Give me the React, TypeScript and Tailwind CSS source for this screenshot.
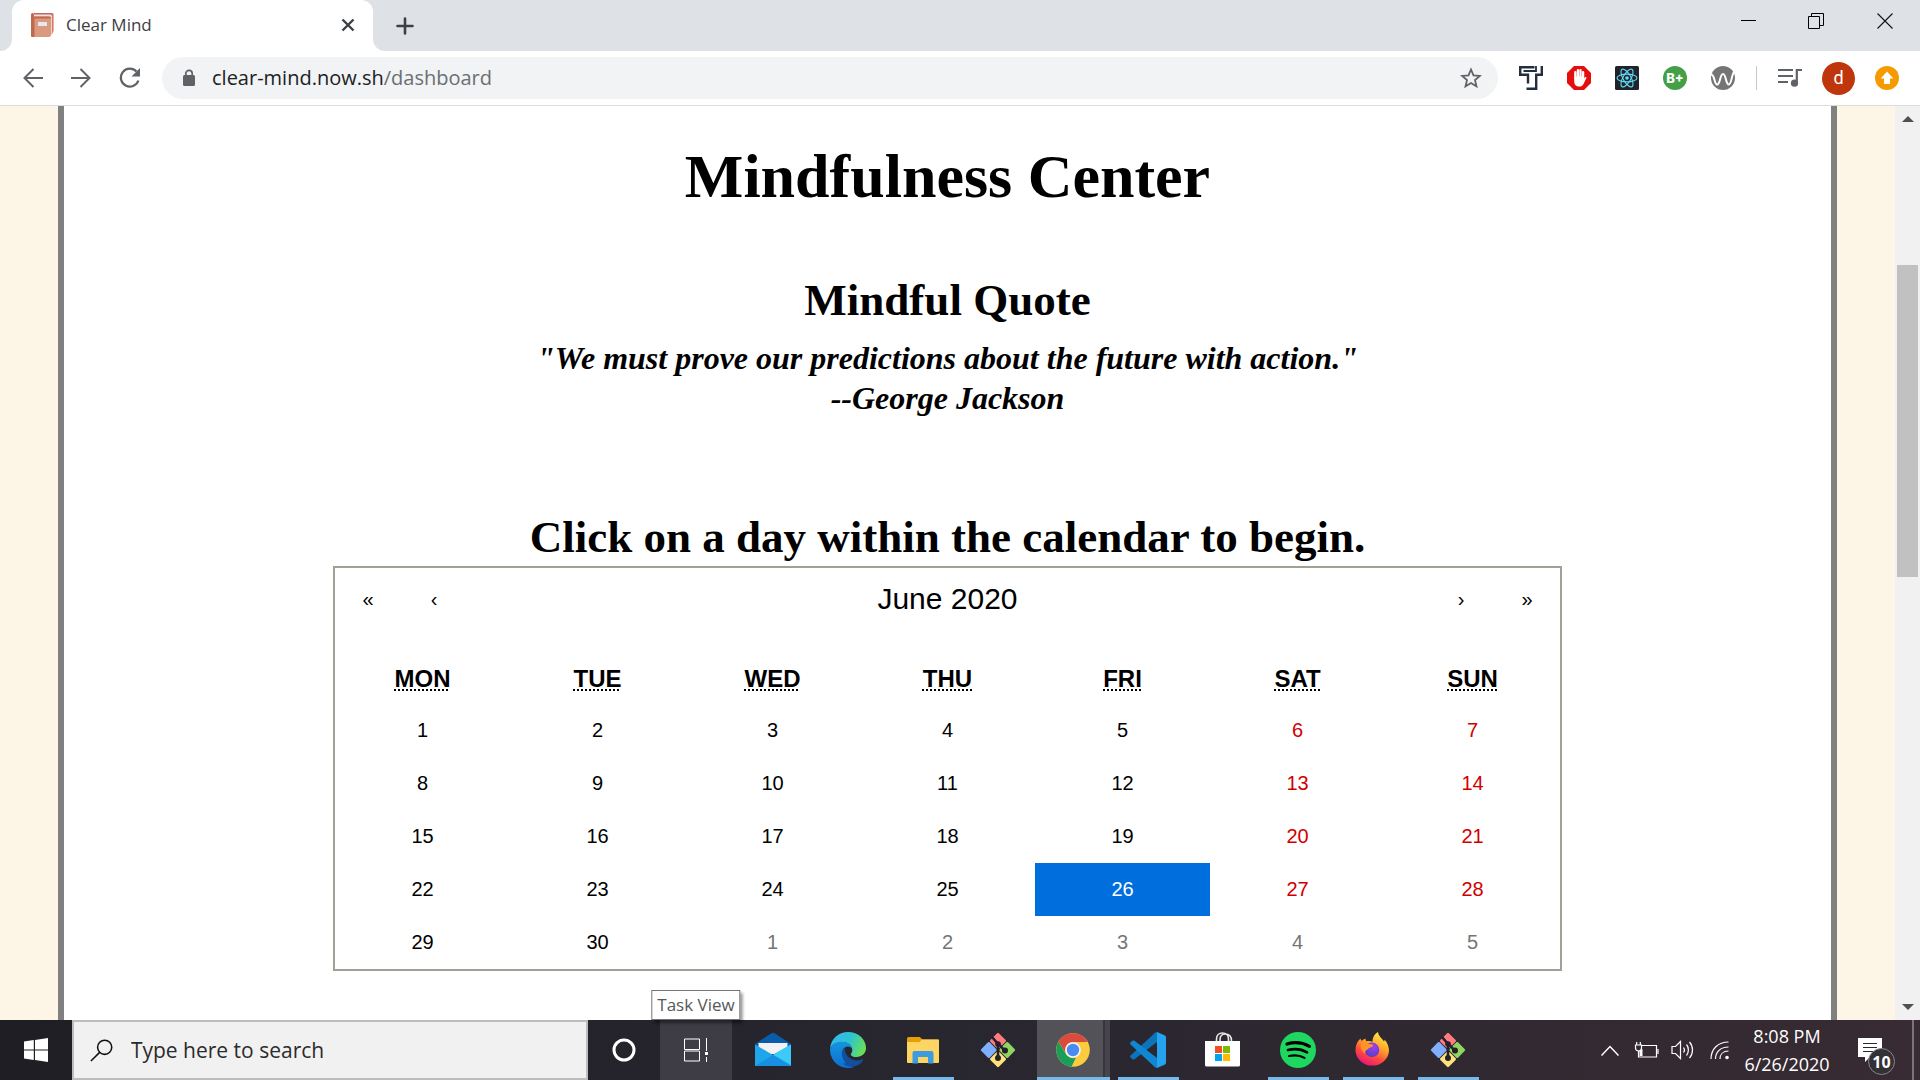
import React from "react";

const UI = "font-['Open_Sans',sans-serif]";

/* ---------- browser icons ---------- */

const BookIcon = () => (
  <svg width="24" height="26" viewBox="0 0 24 26" aria-hidden="true">
    <path d="M4 1h18a1.500 1.500 0 0 1 1.500 1.500V19l-2 4V5H3V2z" fill="#c9674f" />
    <path d="M4 2.500h17.500V5H4z" fill="#e8e4ea" />
    <path d="M21 4l1.200-1V20L21 22z" fill="#f0d5c8" />
    <path d="M1 3a2 2 0 0 1 2-2v3.500h16.500A1.500 1.500 0 0 1 21 6v17a2 2 0 0 1-2 2H2.500A1.500 1.500 0 0 1 1 23.500z" fill="#da9a7e" />
    <path d="M1 3a2 2 0 0 1 2-2v3.500h16.500A1.500 1.500 0 0 1 21 6v.5H4.500V25h-2A1.500 1.500 0 0 1 1 23.500z" fill="#c4674f" />
    <rect x="8" y="10" width="9" height="4" rx=".6" fill="#e9e6ee" />
  </svg>
);

const Arrow = ({ flip = false }: { flip?: boolean }) => (
  <svg width="20" height="20" viewBox="0 0 20 20" fill="none" stroke="#5f6368" strokeWidth="2" className={flip ? "rotate-180" : ""} aria-hidden="true">
    <path d="M20 10H2M10.500 1L1.500 10l9 9" />
  </svg>
);

const Reload = () => (
  <svg width="22" height="22" viewBox="0 0 22 22" aria-hidden="true">
    <path d="M19.400 13.500A9 9 0 1 1 17.500 4.500" fill="none" stroke="#5f6368" strokeWidth="2.200" />
    <path d="M21 1v8.500h-8.500z" fill="#5f6368" />
  </svg>
);

const Lock = () => (
  <svg width="14" height="18" viewBox="0 0 14 18" aria-hidden="true">
    <rect x="1" y="6" width="12" height="11" rx="1.500" fill="#5f6368" />
    <path d="M3.800 7V4.500a3.200 3.200 0 0 1 6.400 0V7" fill="none" stroke="#5f6368" strokeWidth="1.700" />
  </svg>
);

const Star = () => (
  <svg width="22" height="22" viewBox="0 0 22 22" fill="none" stroke="#5f6368" strokeWidth="1.800" aria-hidden="true">
    <path d="M11 2.500l2.500 5.900 6.300.5-4.800 4.200 1.500 6.200-5.500-3.300-5.500 3.300L7 13.100 2.200 8.900l6.300-.5z" />
  </svg>
);

const TIcon = () => (
  <svg width="24" height="24" viewBox="0 0 24 24" fill="none" stroke="#232f3e" strokeWidth="2.400" aria-hidden="true">
    <path d="M15.500 1.200H1.200v7.600h7.800v8.700" />
    <path d="M22.800 0v8.800h-5.600v14H7.500" />
    <path d="M4.500 5h12.500V0" strokeWidth="1.800" />
  </svg>
);

const AdblockIcon = () => (
  <svg width="24" height="24" viewBox="0 0 24 24" aria-hidden="true">
    <path d="M7 0h10l7 7v10l-7 7H7l-7-7V7z" fill="#e60d0d" />
    <path d="M8.300 12V6.200M10.900 11V4.200M13.500 11V4.200M16.100 13V6.200" stroke="#fff" strokeWidth="2.300" strokeLinecap="round" />
    <path d="M7.200 10.500h9.900v2l1-1.300c.8-.6 1.600 0 1.300.7l-2.900 6c-.8 1.600-2.200 2.600-4.200 2.600-3.200 0-5.100-2-5.100-5z" fill="#fff" />
  </svg>
);

const ReactIcon = () => (
  <svg width="24" height="24" viewBox="0 0 24 24" fill="none" stroke="#61dafb" strokeWidth="1.100" aria-hidden="true">
    <rect width="24" height="24" rx="1.500" fill="#20232a" stroke="none" />
    <ellipse cx="12" cy="12" rx="10" ry="3.900" />
    <ellipse cx="12" cy="12" rx="10" ry="3.900" transform="rotate(60 12 12)" />
    <ellipse cx="12" cy="12" rx="10" ry="3.900" transform="rotate(120 12 12)" />
    <circle cx="12" cy="12" r="1.800" fill="#61dafb" stroke="none" />
  </svg>
);

const WaveIcon = () => (
  <svg width="24" height="24" viewBox="1 0 24 24" fill="none" aria-hidden="true">
    <circle cx="13" cy="12" r="12" fill="#757575" />
    <path d="M1 8.500c1.800 0 2.600 2 3.400 5 .8 3.500 1.500 5 2.800 5 3.200 0 2.600-10.500 5.800-10.500s2.600 10.500 5.800 10.500c2.200 0 2.400-6 4.200-10.500L25 3" stroke="#fff" strokeWidth="2" />
  </svg>
);

const QueueIcon = () => (
  <svg width="24" height="20" viewBox="0 0 24 20" fill="none" stroke="#5f6368" strokeWidth="2.200" aria-hidden="true">
    <path d="M0 2h15M0 8h15M0 14h10M18.800 15V2H24" />
    <circle cx="16.500" cy="15.200" r="3.600" fill="#5f6368" stroke="none" />
  </svg>
);

const UpdateIcon = () => (
  <svg width="24" height="24" viewBox="0 0 24 24" aria-hidden="true">
    <circle cx="12" cy="12" r="12" fill="#f59b00" />
    <path d="M12 5.500l6.300 7H15v5.500H9v-5.500H5.700z" fill="#fff" />
  </svg>
);

/* ---------- taskbar icons ---------- */

const Windows = () => (
  <svg width="24" height="24" viewBox="0 0 24 24" fill="#fff" aria-hidden="true">
    <path d="M0 3.500l9.800-1.400v9.300H0zM11 1.900L24 0v11.400H11zM0 12.600h9.800v9.300L0 20.500zM11 12.600h13V24l-13-1.900z" />
  </svg>
);

const SearchIcon = () => (
  <svg width="25" height="25" viewBox="0 0 25 25" fill="none" stroke="#111" strokeWidth="1.700" aria-hidden="true">
    <circle cx="16" cy="9" r="7.700" />
    <path d="M10.500 14.500L1 24" />
  </svg>
);

const TaskViewIcon = () => (
  <svg width="26" height="24" viewBox="0 0 26 24" fill="none" stroke="#fff" aria-hidden="true">
    <path d="M1.500 1h15v10.500h-15zM1.500 13h15v10h-15zM23.500 0v13M23.500 19v5" />
    <rect x="22" y="14" width="3" height="3" fill="#fff" stroke="none" />
  </svg>
);

const Mail = () => (
  <svg width="36" height="36" viewBox="0 0 36 36" aria-hidden="true">
    <path d="M0 12L16 1.500a3.500 3.500 0 0 1 4 0L36 12v6H0z" fill="#0a5ca8" />
    <path d="M3.500 11h29v11h-29z" fill="#f2f2f4" />
    <path d="M0 12.500l18 10.500L36 12.500V34H0z" fill="#1fa5ea" />
    <path d="M0 34l18-11 18 11z" fill="#1690e0" />
    <path d="M18 22.500L36 12.500V33z" fill="#3ccbf6" />
  </svg>
);

const Edge = () => (
  <svg width="36" height="36" viewBox="0 0 36 36" aria-hidden="true">
    <defs>
      <linearGradient id="edgeTop" x1="0" y1=".3" x2="1" y2=".6">
        <stop offset="0" stopColor="#35b8f0" />
        <stop offset=".5" stopColor="#2bc3d2" />
        <stop offset="1" stopColor="#6ce052" />
      </linearGradient>
      <linearGradient id="edgeLow" x1="0" y1="0" x2="0" y2="1">
        <stop offset="0" stopColor="#1595df" />
        <stop offset="1" stopColor="#0b6fd0" />
      </linearGradient>
    </defs>
    <path d="M0 17C.5 7 8.500 0 18 0c10.500 0 18 7.500 18 16 0 5.500-4.200 9-9.500 9-3.500 0-5.700-1.300-5.700-2.600 0-1 1.500-1.700 1.500-4.400 0-4-4-8-9.800-8C6 10 1 13 0 17z" fill="url(#edgeTop)" />
    <path d="M0 18c0-5 6-8.500 12-8.300 6 .2 10 4 10.300 7.300-1-2.500-7.300-4.500-9.300 1.500-2 7 3 15 11 16.500A18 18 0 0 1 0 18z" fill="url(#edgeLow)" />
    <path d="M14.500 15c-5 5-2.500 13 3 16.500s11 2.300 15.500-3.500c.4-.8-.1-1.200-.8-.8C25 30.500 15 27 14.500 15z" fill="#134f9e" />
    <path d="M13 31c4 5 12 5 18 0 2-2 1.500-3 1.500-3-4 3-10 5-19.500 3z" fill="#134f9e" />
  </svg>
);

const Explorer = () => (
  <svg width="32" height="27" viewBox="0 0 32 27" aria-hidden="true">
    <path d="M0 1.500A1.500 1.500 0 0 1 1.500 0h11.300l2.700 2.500H31a1 1 0 0 1 1 1V8H0z" fill="#e5a006" />
    <path d="M0 5h12.500l2.500-2.500h16a1 1 0 0 1 1 1V25a1 1 0 0 1-1 1H1a1 1 0 0 1-1-1z" fill="#fdd563" />
    <path d="M5.500 26.500V16a2 2 0 0 1 2-2h17a2 2 0 0 1 2 2v10.500H21V20H11v6.500z" fill="#3d9be0" />
  </svg>
);

const Git = () => (
  <svg width="36" height="36" viewBox="0 0 36 36" aria-hidden="true">
    <g transform="rotate(45 18 18)">
      <rect x="5.500" y="5.500" width="12" height="12" rx="1.200" fill="#ff7b80" />
      <rect x="18.500" y="5.500" width="12" height="12" rx="1.200" fill="#8fd55f" />
      <rect x="5.500" y="18.500" width="12" height="12" rx="1.200" fill="#7fb0ff" />
      <rect x="18.500" y="18.500" width="12" height="12" rx="1.200" fill="#ffe27c" />
    </g>
    <path d="M12 5L18 12v14M18 11l6 7" fill="none" stroke="#241f2a" strokeWidth="2.600" />
    <circle cx="18" cy="12" r="2.800" fill="#241f2a" />
    <circle cx="18" cy="26" r="3" fill="#241f2a" />
    <circle cx="25" cy="18.500" r="3" fill="#241f2a" />
  </svg>
);

const Chrome = () => (
  <svg width="34" height="34" viewBox="0 0 34 34" aria-hidden="true">
    <circle cx="17" cy="17" r="16.800" fill="#fdcb3e" />
    <path d="M2.500 8.500A16.800 16.800 0 0 1 31.600 9H17a8 8 0 0 0-6.900 12z" fill="#db4a3f" />
    <path d="M2.500 8.500l7.500 12.700A8 8 0 0 0 20 24.500l-4.500 9.200A16.800 16.800 0 0 1 2.500 8.500z" fill="#1a9f5a" />
    <circle cx="17" cy="17" r="7.800" fill="#f5f5f5" />
    <circle cx="17" cy="17" r="6.200" fill="#4a8af4" />
  </svg>
);

const VSCode = () => (
  <svg width="36" height="36" viewBox="0 0 36 36" aria-hidden="true">
    <path d="M27 0v10L4.500 27.200a1.800 1.800 0 0 1-2.200 0L.6 25.600a1.500 1.500 0 0 1 0-2.200L25 .8A3 3 0 0 1 27 0z" fill="#0b74bb" />
    <path d="M27 36V26L4.500 8.800a1.800 1.800 0 0 0-2.200 0L.6 10.400a1.500 1.500 0 0 0 0 2.200L25 35.200a3 3 0 0 0 2 .8z" fill="#1186d3" />
    <path d="M27 0l8 3.600a1.800 1.800 0 0 1 1 1.600v25.600a1.800 1.800 0 0 1-1 1.600L27 36z" fill="#25a2f0" />
  </svg>
);

const Store = () => (
  <svg width="36" height="36" viewBox="0 0 36 36" aria-hidden="true">
    <path d="M11.500 10V7c0-3.500 2.500-6 6-6s6 2.500 6 6v3M15 9V7.500c0-3.500 2-5.500 5-5.500s6.500 1.500 6.500 7" fill="none" stroke="#e9e9ec" strokeWidth="1.600" />
    <path d="M0 9h35v24a1.500 1.500 0 0 1-1.500 1.500h-32A1.500 1.500 0 0 1 0 33z" fill="#fff" />
    <path d="M10 14h7v7h-7z" fill="#f25022" />
    <path d="M18 14h7v7h-7z" fill="#7fba00" />
    <path d="M10 22h7v7h-7z" fill="#00a4ef" />
    <path d="M18 22h7v7h-7z" fill="#ffb900" />
  </svg>
);

const Spotify = () => (
  <svg width="36" height="36" viewBox="0 0 36 36" fill="none" stroke="#000" strokeLinecap="round" aria-hidden="true">
    <circle cx="18" cy="18" r="18" fill="#1ed760" stroke="none" />
    <path d="M7 12c7.500-2.200 16-1.300 22.500 2.300" strokeWidth="3.200" />
    <path d="M8 18c7-1.800 13.500-1 19 2.300" strokeWidth="2.700" />
    <path d="M9 24c6-1.300 11-.8 15.500 1.900" strokeWidth="2.200" />
  </svg>
);

const Firefox = () => (
  <svg width="36" height="36" viewBox="0 0 36 36" aria-hidden="true">
    <defs>
      <linearGradient id="ffBody" x1=".8" y1="0" x2=".3" y2="1">
        <stop offset="0" stopColor="#fff04a" />
        <stop offset=".4" stopColor="#ffa62a" />
        <stop offset=".7" stopColor="#ff4a3d" />
        <stop offset="1" stopColor="#e8127c" />
      </linearGradient>
      <radialGradient id="ffGlobe" cx=".6" cy=".3" r=".8">
        <stop offset="0" stopColor="#a43cf0" />
        <stop offset="1" stopColor="#4b3fc0" />
      </radialGradient>
    </defs>
    <path d="M5.500 6.500c.3 1.500.8 2 1.500 2.300C8.300 7.500 9.500 7 10.500 6.500c0 1.300.3 2 1 2.700 1.500-.3 4.500 0 6 .6C17.500 5 20 1.500 23 0c.5 4.500 4 6 6 9.500.5-.5.5-1.500.5-2 3.300 3.500 4.500 8 4.500 11.500A16.800 15.800 0 0 1 .5 19C.3 14 2 9.500 5.500 6.500z" fill="url(#ffBody)" />
    <circle cx="17" cy="17.800" r="7.300" fill="url(#ffGlobe)" />
    <path d="M6 11.500c3-2 6-1.500 7.500.5 1.800.2 3.800 0 4.800 1.200-.6 2.300-4.800 2-5.500 4.300-2 .2-3.300 2-2.300 4.500C6.500 19.500 5 15 6 11.500z" fill="#ff9327" />
  </svg>
);

/* ---------- tray icons ---------- */

const Battery = () => (
  <svg width="25" height="18" viewBox="0 0 25 18" fill="none" stroke="#fff" strokeWidth="1.200" aria-hidden="true">
    <path d="M8 4.500h14.500v11.500H4.500v-6M24 8v5" />
    <path d="M1.500 4h6v3a3 3 0 0 1-6 0zM2.700 4V1M6.300 4V1" />
    <path d="M5.500 9.500l3-1.500v7h-3z" fill="#fff" stroke="none" />
  </svg>
);

const Sound = () => (
  <svg width="23" height="20" viewBox="0 0 23 20" fill="none" stroke="#fff" strokeWidth="1.200" aria-hidden="true">
    <path d="M1 6.500h3.500L9.500 1.500v17L4.500 13.500H1zM12.500 7.500c1.200 1.500 1.200 3.500 0 5M15.500 4.500c2.500 3 2.500 8 0 11M18.500 2c4 4.500 4 11.500 0 16" />
  </svg>
);

const Wifi = () => (
  <svg width="19" height="19" viewBox="0 0 19 19" fill="none" stroke="#fff" strokeWidth="1.200" aria-hidden="true">
    <path d="M1 18C1 8 8 1 18.500 1M5.500 18c0-7 5-12 13-12M10 18c0-4.500 3-8 8.500-8" />
    <circle cx="17" cy="16.500" r="1.800" fill="#fff" stroke="none" />
  </svg>
);

/* ---------- browser chrome ---------- */

const TabStrip = () => (
  <div className="flex h-[51px] shrink-0 items-stretch bg-[#dee1e6]">
    <div className="flex w-3 bg-white">
      <div className="flex-1 rounded-br-xl bg-[#dee1e6]" />
    </div>
    <div className="bg-[#dee1e6]">
      <div className="flex h-full w-[361px] items-center rounded-t-xl bg-white pr-4 pb-0.5 pl-[18px]">
        <BookIcon />
        <span className="ml-3 flex-1 text-[17px] leading-6 text-[#3c4043]">Clear Mind</span>
        <button aria-label="Close tab" className="p-0.5">
          <svg width="14" height="14" viewBox="0 0 14 14" stroke="#3c4043" strokeWidth="2.400" aria-hidden="true">
            <path d="M1.500 1.500l11 11M12.500 1.500l-11 11" />
          </svg>
        </button>
      </div>
    </div>
    <div className="flex flex-1 bg-white">
      <div className="flex flex-1 items-center rounded-bl-xl bg-[#dee1e6] pl-[23px]">
        <button aria-label="New tab">
          <svg width="18" height="18" viewBox="0 0 18 18" stroke="#3c4043" strokeWidth="2.600" strokeLinecap="round" aria-hidden="true">
            <path d="M9 1.500v15M1.500 9h15" />
          </svg>
        </button>
        <div className="ml-auto flex h-full items-start pt-3 pr-[27px]">
          <button aria-label="Minimize" className="flex h-[18px] w-[69px] items-center justify-end">
            <svg width="16" height="16" viewBox="0 0 16 16" stroke="#000" aria-hidden="true"><path d="M1 7.500h15" /></svg>
          </button>
          <button aria-label="Restore" className="flex h-[18px] w-[68px] items-center justify-end">
            <svg width="16" height="16" viewBox="0 0 16 16" fill="none" stroke="#000" aria-hidden="true">
              <path d="M.5 3.500h11v12H.5zM3.500 3V.5h12v12H12" />
            </svg>
          </button>
          <button aria-label="Close" className="flex h-[18px] w-[69px] items-center justify-end">
            <svg width="16" height="16" viewBox="0 0 16 16" stroke="#111" strokeWidth="1.100" aria-hidden="true"><path d="M.5 .5l15 15M15.500 .5l-15 15" /></svg>
          </button>
        </div>
      </div>
    </div>
  </div>
);

const Toolbar = () => (
  <div className="flex h-[55px] shrink-0 items-center border-b border-[#dadce0] bg-white pr-[21px] pl-[23px]">
    <div className="flex items-center gap-7">
      <button aria-label="Back"><Arrow /></button>
      <button aria-label="Forward"><Arrow flip /></button>
      <button aria-label="Reload"><Reload /></button>
    </div>
    <div className="ml-[21px] flex h-[42px] flex-1 items-center rounded-full bg-[#f1f3f4] pr-4 pl-5">
      <Lock />
      <label className="relative ml-4 flex-1">
        <input
          aria-label="Address"
          defaultValue="clear-mind.now.sh/dashboard"
          className="w-full bg-transparent text-xl leading-7 text-transparent caret-black outline-none"
        />
        <span aria-hidden="true" className="pointer-events-none absolute inset-0 text-xl leading-7 text-[#202124]">
          clear-mind.now.sh<span className="text-[#6b6f73]">/dashboard</span>
        </span>
      </label>
      <button aria-label="Bookmark"><Star /></button>
    </div>
    <div className="ml-[21px] flex items-center gap-6">
      <button aria-label="Text extension"><TIcon /></button>
      <button aria-label="Ad blocker"><AdblockIcon /></button>
      <button aria-label="React tools"><ReactIcon /></button>
      <button className="flex size-6 items-center justify-center rounded-full bg-[#43a047] font-['Inter',sans-serif] text-[13px] leading-none font-extrabold text-white">B+</button>
      <button aria-label="Wave"><WaveIcon /></button>
    </div>
    <div className="ml-[21px] h-6 w-px bg-[#c6c9cd]" />
    <div className="ml-[21px] flex items-center gap-5">
      <button aria-label="Media queue"><QueueIcon /></button>
      <button className="flex size-[33px] items-center justify-center rounded-full bg-[#bf360c] font-['Roboto',sans-serif] text-lg leading-none text-white">d</button>
      <button aria-label="Update"><UpdateIcon /></button>
    </div>
  </div>
);

const Scrollbar = () => (
  <div className="flex w-[25px] shrink-0 flex-col items-center bg-[#f1f1f1] py-2.5">
    <svg width="12" height="6" viewBox="0 0 12 6" fill="#505050" aria-hidden="true"><path d="M0 6L6 0l6 6z" /></svg>
    <div className="flex w-full flex-1 flex-col items-center">
      <div className="grow-[143]" />
      <div className="w-[21px] grow-[312] bg-[#c1c1c1]" />
      <div className="grow-[427]" />
    </div>
    <svg width="12" height="6" viewBox="0 0 12 6" fill="#505050" aria-hidden="true"><path d="M0 0l6 6 6-6z" /></svg>
  </div>
);

/* ---------- page ---------- */

const WEEKDAYS: [string, string][] = [
  ["MON", "Monday"], ["TUE", "Tuesday"], ["WED", "Wednesday"], ["THU", "Thursday"],
  ["FRI", "Friday"], ["SAT", "Saturday"], ["SUN", "Sunday"],
];

const WEEKS = Array.from({ length: 5 }, (_, w) =>
  Array.from({ length: 7 }, (_, d) => {
    const n = w * 7 + d + 1;
    return { day: n > 30 ? n - 30 : n, outside: n > 30, weekend: d > 4 };
  }),
);

const dayClass = (c: { day: number; outside: boolean; weekend: boolean }) => {
  if (c.outside) return "text-[#757575]";
  if (c.day === 26) return "bg-[#006edc] text-white";
  return c.weekend ? "text-[#d10000]" : "text-black";
};

const NavButton = ({ label, children }: { label: string; children: React.ReactNode }) => (
  <button aria-label={label} className="h-full w-[66px] text-xl">{children}</button>
);

const Calendar = () => (
  <div className="w-full max-w-[1229px] border-2 border-[#a0a096] font-['Liberation_Sans',Arial,sans-serif] text-black">
    <div className="flex h-[66px] items-center pb-1">
      <NavButton label="Previous year">«</NavButton>
      <NavButton label="Previous month">‹</NavButton>
      <button className="h-full flex-1 text-3xl">June 2020</button>
      <NavButton label="Next month">›</NavButton>
      <NavButton label="Next year">»</NavButton>
    </div>
    <table className="mt-[22px] w-full table-fixed border-collapse">
      <thead>
        <tr>
          {WEEKDAYS.map(([short, long]) => (
            <th key={short} className="h-12 p-0 pb-0.5 text-2xl leading-6 font-bold">
              <abbr title={long} className="underline decoration-dotted decoration-2 underline-offset-2">{short}</abbr>
            </th>
          ))}
        </tr>
      </thead>
      <tbody>
        {WEEKS.map((week, i) => (
          <tr key={i}>
            {week.map((c) => (
              <td key={c.day} className="p-0">
                <button className={`block h-[53px] w-full pb-0.5 text-xl ${dayClass(c)}`}>{c.day}</button>
              </td>
            ))}
          </tr>
        ))}
      </tbody>
    </table>
  </div>
);

const Page = () => (
  <div className="flex min-h-0 flex-1">
    <div className="flex min-w-0 flex-1 overflow-hidden bg-[#fdf5e6] px-[58px]">
      <main className="flex flex-1 flex-col items-center border-x-[6px] border-[#808080] bg-white text-center font-['Liberation_Serif',serif] text-black">
        <h1 className="mt-[34px] text-[62px] leading-[72px] font-bold">Mindfulness Center</h1>
        <h2 className="mt-[60px] text-[45px] leading-[56px] font-bold">Mindful Quote</h2>
        <p className="mt-2.5 text-[32px] leading-10 font-bold italic">
          "We must prove our predictions about the future with action."
          <br />
          --George Jackson
        </p>
        <h2 className="mt-[90px] text-[45px] leading-[58px] font-bold">Click on a day within the calendar to begin.</h2>
        <Calendar />
      </main>
    </div>
    <Scrollbar />
  </div>
);

/* ---------- taskbar ---------- */

const APPS: { name: string; icon: React.ReactNode; running?: boolean; active?: boolean }[] = [
  { name: "Mail", icon: <Mail /> },
  { name: "Edge", icon: <Edge /> },
  { name: "File Explorer", icon: <Explorer />, running: true },
  { name: "Git GUI", icon: <Git /> },
  { name: "Chrome", icon: <Chrome />, active: true },
  { name: "VS Code", icon: <VSCode />, running: true },
  { name: "Store", icon: <Store /> },
  { name: "Spotify", icon: <Spotify />, running: true },
  { name: "Firefox", icon: <Firefox />, running: true },
  { name: "Git Bash", icon: <Git />, running: true },
];

const AppButton = ({ name, icon, running, active }: (typeof APPS)[number]) => (
  <button
    aria-label={name}
    className="relative flex h-full w-[75px] items-center justify-center"
  >
    {active && (
      <span className="absolute inset-y-0 left-0.5 flex w-[73px] border-b-[3px] border-[#76b9ed]">
        <span className="w-[66px] bg-[#535259]" />
        <span className="w-0.5 bg-[#37363d]" />
        <span className="flex-1 bg-[#46454c]" />
      </span>
    )}
    {running && <span className="absolute right-1.5 bottom-0 left-2 h-[3px] bg-[#76b9ed]" />}
    <span className="relative">{icon}</span>
  </button>
);

const Taskbar = () => (
  <div className="flex h-[60px] shrink-0 items-stretch bg-linear-to-r from-[#1f1e24] via-[#28262f] to-[#382b33] text-white">
    <button aria-label="Start" className="flex w-[72px] items-center justify-center"><Windows /></button>
    <label className="flex w-[516px] items-center border-2 border-[#bdbdbd] bg-[#f1f1f1] pl-4">
      <SearchIcon />
      <input
        aria-label="Search"
        placeholder="Type here to search"
        className="ml-[18px] w-full bg-transparent text-[21px] leading-7 outline-none placeholder:text-[#2b2b2b]"
      />
    </label>
    <button aria-label="Cortana" className="flex w-[72px] items-center justify-center">
      <svg width="24" height="24" viewBox="0 0 24 24" fill="none" stroke="#fff" strokeWidth="3" aria-hidden="true"><circle cx="12" cy="12" r="10" /></svg>
    </button>
    <button aria-label="Task View" className="relative mr-[3px] flex w-[72px] items-center justify-center bg-[#3e3c45]">
      <TaskViewIcon />
      <span role="tooltip" className="absolute bottom-full left-1/2 -translate-x-1/2 border border-[#767676] bg-white px-[5px] text-[17px] leading-7 whitespace-nowrap text-[#575757] shadow-[3px_3px_3px_rgba(0,0,0,0.45)]">
        Task View
      </span>
    </button>
    {APPS.map((a) => <AppButton key={a.name} {...a} />)}
    <div className="ml-auto flex items-center">
      <button aria-label="Show hidden icons" className="mr-[15px]">
        <svg width="18" height="11" viewBox="0 0 18 11" fill="none" stroke="#fff" strokeWidth="1.500" aria-hidden="true"><path d="M.5 10.500L9 1.500l8.500 9" /></svg>
      </button>
      <button aria-label="Battery" className="mr-3"><Battery /></button>
      <button aria-label="Volume" className="mr-4"><Sound /></button>
      <button aria-label="Network" className="mr-3.5"><Wifi /></button>
      <button className="w-[88px] text-center text-lg leading-7 whitespace-nowrap">
        8:08 PM
        <br />
        6/26/2020
      </button>
      <button aria-label="10 notifications" className="relative ml-[27px] h-6 w-6">
        <svg width="24" height="24" viewBox="0 0 24 24" aria-hidden="true">
          <path d="M0 0h24v19H12l-5 5v-5H0z" fill="#fff" />
          <path d="M5 5.500h14M5 9.500h14M5 13.500h14" stroke="#2c262d" strokeWidth="1.200" />
        </svg>
        <span className="absolute top-2.5 left-2.5 flex size-[27px] items-center justify-center rounded-full border border-[#8a868b] bg-[#333036] text-base leading-none font-bold">10</span>
      </button>
      <div className="ml-[30px] h-[60px] w-0.5 bg-[#7a7479]" />
      <div className="w-1.5" />
    </div>
  </div>
);

export default function App() {
  return (
    <div className={`flex h-screen flex-col overflow-hidden ${UI}`}>
      <TabStrip />
      <Toolbar />
      <Page />
      <Taskbar />
    </div>
  );
}
